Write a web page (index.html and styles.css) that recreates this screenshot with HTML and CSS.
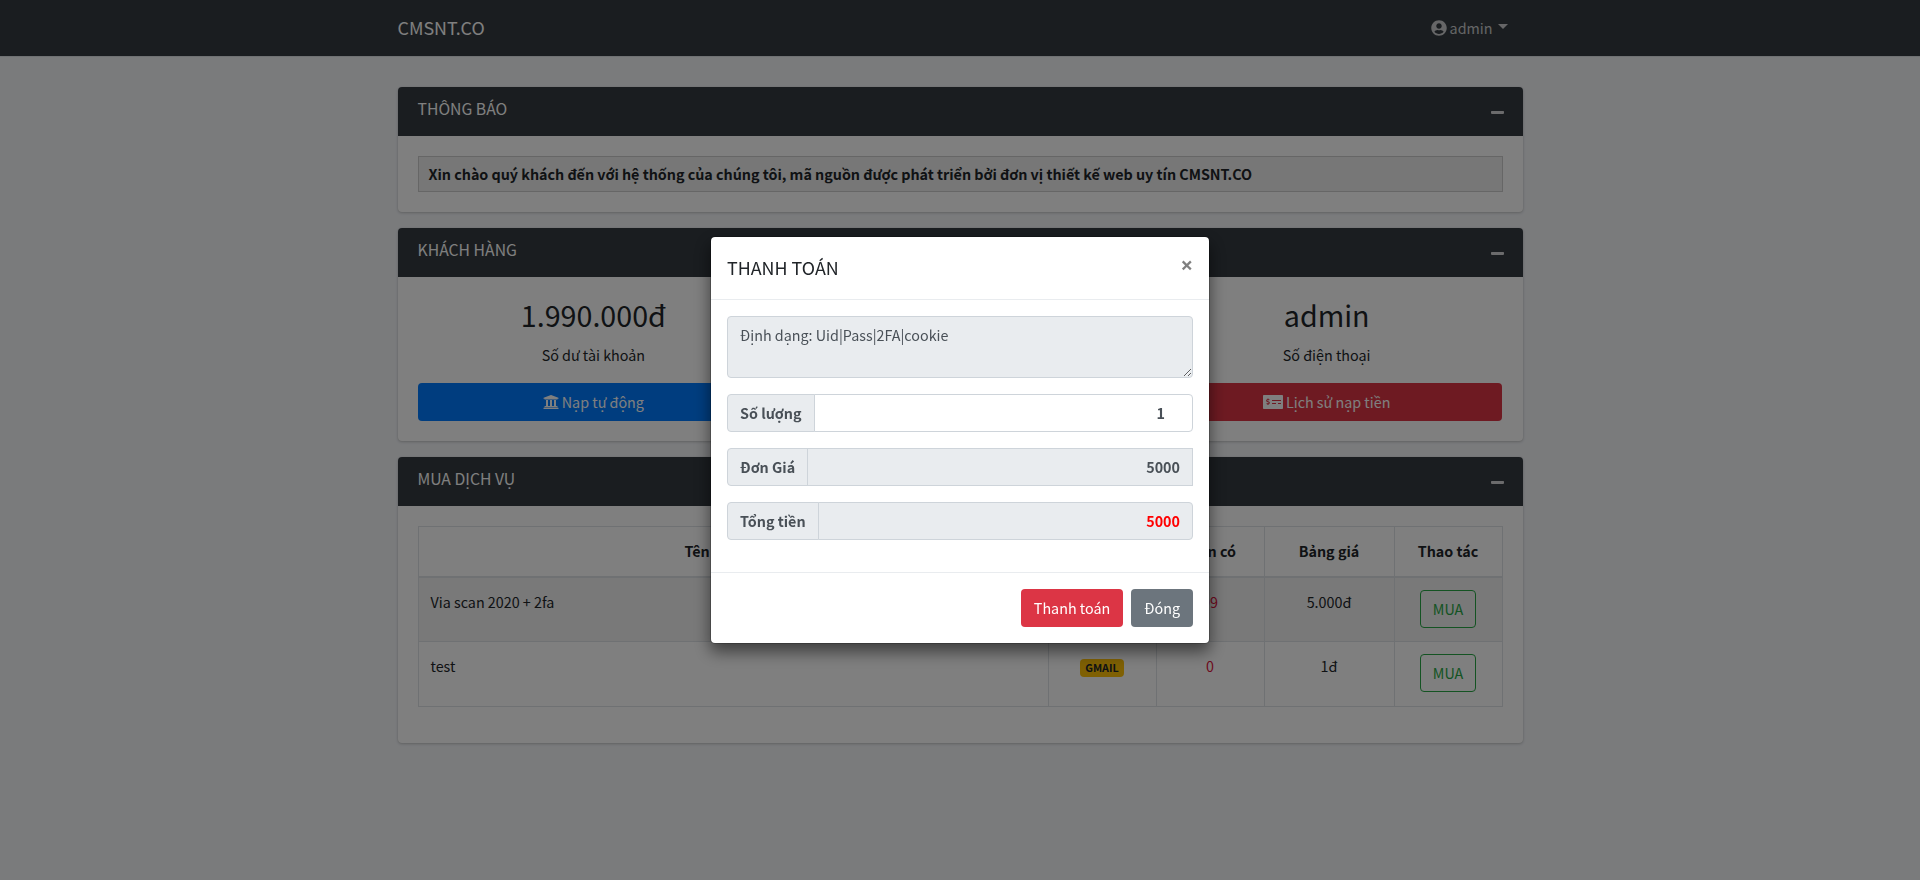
FILE: index.html
```html
<!DOCTYPE html>
<html lang="vi">
<head>
<meta charset="utf-8">
<title>CMSNT.CO</title>
<link rel="stylesheet" href="styles.css">
</head>
<body>
<svg class="sprite" width="0" height="0">
  <symbol id="i-minus" viewBox="0 0 448 512"><path d="M416 208H32c-17.67 0-32 14.33-32 32v32c0 17.67 14.33 32 32 32h384c17.67 0 32-14.33 32-32v-32c0-17.67-14.33-32-32-32z"/></symbol>
</svg>
<nav class="navbar">
  <div class="container navbar-row">
    <a class="brand">CMSNT.CO</a>
    <a class="user"><svg class="icon" width="16" height="16" viewBox="0 0 496 512"><path d="M248 8C111 8 0 119 0 256s111 248 248 248 248-111 248-248S385 8 248 8zm0 96c48.6 0 88 39.4 88 88s-39.4 88-88 88-88-39.4-88-88 39.4-88 88-88zm0 344c-58.7 0-111.3-26.6-146.5-68.2 18.8-35.4 55.6-59.8 98.5-59.8 2.4 0 4.8.4 7.1 1.1 13 4.2 26.6 6.9 40.9 6.9 14.3 0 28-2.7 40.9-6.9 2.3-.7 4.7-1.1 7.1-1.1 42.9 0 79.7 24.4 98.5 59.8C359.3 421.4 306.7 448 248 448z"/></svg><span>admin</span><i class="caret"></i></a>
  </div>
</nav>
<main class="container content">
  <section class="card">
    <header class="card-header"><h3>THÔNG BÁO</h3><svg class="icon tool" width="13" height="15"><use href="#i-minus"/></svg></header>
    <div class="card-body"><div class="notice">Xin chào quý khách đến với hệ thống của chúng tôi, mã nguồn được phát triển bởi đơn vị thiết kế web uy tín CMSNT.CO</div></div>
  </section>
  <section class="card">
    <header class="card-header"><h3>KHÁCH HÀNG</h3><svg class="icon tool" width="13" height="15"><use href="#i-minus"/></svg></header>
    <div class="card-body stats">
      <div class="stat">
        <h2>1.990.000đ</h2>
        <p>Số dư tài khoản</p>
        <a class="btn btn-primary"><svg class="icon" width="16" height="16" viewBox="0 0 512 512"><path d="M496 128v16a8 8 0 0 1-8 8h-24v12c0 6.627-5.373 12-12 12H60c-6.627 0-12-5.373-12-12v-12H24a8 8 0 0 1-8-8v-16a8 8 0 0 1 4.941-7.392l232-88a7.996 7.996 0 0 1 6.118 0l232 88A8 8 0 0 1 496 128zm-24 304H40c-13.255 0-24 10.745-24 24v16a8 8 0 0 0 8 8h464a8 8 0 0 0 8-8v-16c0-13.255-10.745-24-24-24zM96 192v192H60c-6.627 0-12 5.373-12 12v20h416v-20c0-6.627-5.373-12-12-12h-36V192h-64v192h-64V192h-64v192h-64V192H96z"/></svg><span>Nạp tự động</span></a>
      </div>
      <div class="stat"></div>
      <div class="stat">
        <h2>admin</h2>
        <p>Số điện thoại</p>
        <a class="btn btn-danger"><svg class="icon" width="20" height="16" viewBox="0 0 640 512"><path d="M608 32H32C14.33 32 0 46.33 0 64v384c0 17.67 14.33 32 32 32h576c17.67 0 32-14.33 32-32V64c0-17.67-14.33-32-32-32zM176 327.88V344c0 4.42-3.58 8-8 8h-16c-4.42 0-8-3.58-8-8v-16.29c-11.29-.58-22.27-4.52-31.37-11.35-3.9-2.93-4.1-8.77-.57-12.14l11.75-11.21c2.77-2.64 6.89-2.76 10.13-.73 3.87 2.42 8.26 3.72 12.82 3.72h28.11c6.5 0 11.8-5.92 11.8-13.19 0-5.95-3.61-11.19-8.77-12.73l-45-13.5c-18.59-5.58-31.58-23.42-31.58-43.39 0-24.52 19.05-44.44 42.67-45.07V152c0-4.42 3.58-8 8-8h16c4.42 0 8 3.58 8 8v16.29c11.29.58 22.27 4.51 31.37 11.35 3.9 2.93 4.1 8.77.57 12.14l-11.75 11.21c-2.77 2.64-6.89 2.76-10.13.73-3.87-2.43-8.26-3.72-12.82-3.72h-28.11c-6.5 0-11.8 5.92-11.8 13.19 0 5.95 3.61 11.19 8.77 12.73l45 13.5c18.59 5.58 31.58 23.42 31.58 43.39 0 24.53-19.05 44.44-42.67 45.07zM416 312c0 4.42-3.58 8-8 8H296c-4.42 0-8-3.58-8-8v-16c0-4.42 3.58-8 8-8h112c4.42 0 8 3.58 8 8v16zm160 0c0 4.42-3.58 8-8 8h-80c-4.42 0-8-3.58-8-8v-16c0-4.42 3.58-8 8-8h80c4.42 0 8 3.58 8 8v16zm0-96c0 4.42-3.58 8-8 8H296c-4.42 0-8-3.58-8-8v-16c0-4.42 3.58-8 8-8h272c4.42 0 8 3.58 8 8v16z"/></svg><span>Lịch sử nạp tiền</span></a>
      </div>
    </div>
  </section>
  <section class="card">
    <header class="card-header"><h3>MUA DỊCH VỤ</h3><svg class="icon tool" width="13" height="15"><use href="#i-minus"/></svg></header>
    <div class="card-body">
      <table class="table">
        <colgroup><col class="c-name"><col class="c-type"><col class="c-stock"><col class="c-price"><col class="c-action"></colgroup>
        <thead><tr><th>Tên sản phẩm</th><th></th><th>Hiện có</th><th>Bảng giá</th><th>Thao tác</th></tr></thead>
        <tbody>
          <tr><td>Via scan 2020 + 2fa</td><td></td><td class="stock">99</td><td>5.000đ</td><td><a class="btn btn-outline">MUA</a></td></tr>
          <tr><td>test</td><td><span class="badge">GMAIL</span></td><td class="stock">0</td><td>1đ</td><td><a class="btn btn-outline">MUA</a></td></tr>
        </tbody>
      </table>
    </div>
  </section>
</main>
<div class="backdrop">
  <div class="modal">
    <div class="modal-header"><h4>THANH TOÁN</h4><span class="close">×</span></div>
    <div class="modal-body">
      <textarea class="control format" readonly>Định dạng: Uid|Pass|2FA|cookie</textarea>
      <div class="group"><label>Số lượng</label><div class="control value quantity">1</div></div>
      <div class="group"><label>Đơn Giá</label><div class="control value locked square">5000</div></div>
      <div class="group"><label>Tổng tiền</label><div class="control value locked total">5000</div></div>
    </div>
    <div class="modal-footer"><a class="btn btn-danger">Thanh toán</a><a class="btn btn-secondary">Đóng</a></div>
  </div>
</div>
</body>
</html>
```
FILE: styles.css
```css
* { box-sizing: border-box; }
:root { --fs: 14.33px; }
body {
  margin: 0;
  background: #f4f6f9;
  color: #212529;
  font-family: "Source Sans Pro", "Noto Sans CJK JP", "Noto Sans", sans-serif;
  font-size: var(--fs);
  line-height: 24px;
  height: 880px;
  overflow: hidden;
}
h2, h3, h4, p { margin: 0; font-weight: 400; }
.sprite { display: block; position: absolute; }
.icon { fill: currentColor; flex: none; }
.container { width: 1125px; margin: 0 auto; }
.navbar { height: 57px; background: #343a40; border-bottom: 1px solid #dee2e6; }
.navbar-row { display: flex; justify-content: space-between; align-items: center; height: 56px; }
.brand { font-size: 17.9px; line-height: 30px; padding-bottom: 2px; color: #fff; }
.user { display: flex; align-items: center; color: rgba(255,255,255,.75); padding-right: 15px; }
.user span { margin-left: 3px; }
.caret { flex: none; border: 5px solid transparent; border-top-color: currentColor; border-bottom: 0; margin: -3px 0 0 5px; }
.content { padding-top: 30px; }
.card {
  background: #fff;
  border-radius: 4px;
  margin-bottom: 16px;
  box-shadow: 0 0 1px rgba(0,0,0,.125), 0 1px 3px rgba(0,0,0,.2);
}
.card-header {
  display: flex;
  justify-content: space-between;
  height: 49px;
  padding: 11px 19px 0 20px;
  background: #343a40;
  color: #fff;
  border-radius: 4px 4px 0 0;
}
.card-header h3 { font-size: 15.76px; line-height: 21px; }
.tool { margin-top: 7px; opacity: .8; }
.card-body { padding: 20px; }
.notice {
  height: 36px;
  padding: 5px 10px;
  border: 1px solid #ccc;
  background: #eee;
  font-weight: 700;
  letter-spacing: -.02px;
}
.stats { display: grid; grid-template-columns: repeat(3, 1fr); gap: 15px; height: 164px; }
.stat { text-align: center; }
.stat h2 { font-size: 28.66px; line-height: 36px; margin-bottom: 10px; }
.stat p { margin-bottom: 16px; }
.stat .btn { width: 100%; }
.btn {
  display: inline-flex;
  align-items: center;
  justify-content: center;
  gap: 3px;
  height: 38px;
  padding: 0 12px;
  border: 1px solid transparent;
  border-radius: 4px;
  color: #fff;
}
.btn-primary { background: #007bff; }
.btn-danger { background: #dc3545; }
.btn-secondary { background: #6c757d; }
.btn-outline { border-color: #28a745; color: #28a745; vertical-align: top; }
.table { width: 100%; table-layout: fixed; border-collapse: collapse; margin-bottom: 16px; text-align: center; }
.table th, .table td { border: 1px solid #dee2e6; padding: 12px; vertical-align: top; }
.table th { height: 50px; border-bottom-width: 2px; }
.table td { height: 65px; }
.table td:first-child { text-align: left; }
.table tbody tr:first-child { background: #f2f2f2; }
.c-name { width: 630px; }
.c-type, .c-stock, .c-action { width: 108px; }
.c-price { width: 130px; }
.stock { color: #dc143c; }
.badge {
  display: inline-block;
  padding: 3px 5px;
  border-radius: 4px;
  background: #ffc107;
  font-size: 10.75px;
  font-weight: 700;
  line-height: 12px;
}
.backdrop { position: fixed; inset: 0; background: rgba(0,0,0,.5); }
.modal {
  width: 500px;
  margin: 236px auto 0;
  border: 1px solid rgba(0,0,0,.2);
  border-radius: 5px;
  background: #fff;
  background-clip: padding-box;
  box-shadow: 0 8px 16px rgba(0,0,0,.5);
}
.modal-header { display: flex; justify-content: space-between; height: 63px; padding: 15px 16px 16px; border-bottom: 1px solid #e9ecef; }
.modal-header h4 { font-size: 17.9px; line-height: 30px; }
.close { font-family: "Open Sans", sans-serif; font-size: 22px; font-weight: 700; line-height: 24px; color: rgba(0,0,0,.5); }
.modal-body { padding: 16px; }
.control {
  border: 1px solid #ced4da;
  border-radius: 4px;
  background: #fff;
  color: #495057;
}
.format {
  display: block;
  width: 100%;
  height: 62px;
  margin-bottom: 16px;
  padding: 6px 12px;
  background: #e9ecef;
  font: inherit;
  outline: 0;
  overflow: hidden;
  resize: vertical;
}
.group { display: flex; height: 38px; margin-bottom: 16px; font-weight: 700; }
.group label { padding: 6px 12px; border: 1px solid #ced4da; border-radius: 4px 0 0 4px; background: #e9ecef; color: #495057; }
.value { flex: 1; margin-left: -1px; padding: 6px 12px; border-radius: 0 4px 4px 0; text-align: right; }
.quantity { padding-right: 27px; }
.locked { background: #e9ecef; }
.square { border-radius: 0; }
.total { color: red; }
.modal-footer { display: flex; justify-content: flex-end; gap: 8px; padding: 16px; border-top: 1px solid #e9ecef; }
```
